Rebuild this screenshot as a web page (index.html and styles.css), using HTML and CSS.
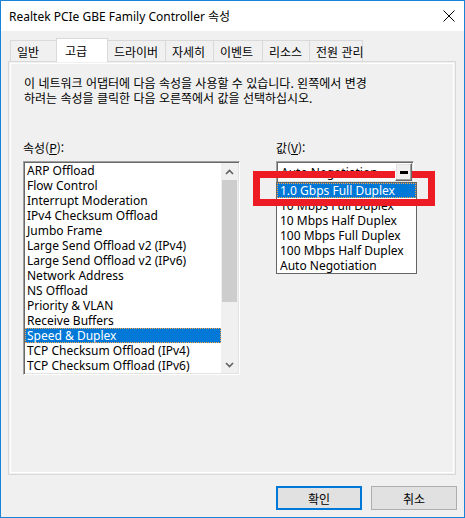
FILE: index.html
```html
<!DOCTYPE html>
<html lang="ko">
<head>
<meta charset="utf-8">
<title>Realtek PCIe GBE Family Controller 속성</title>
<link rel="stylesheet" href="styles.css">
</head>
<body>
<div class="window">
  <div class="titlebar">
    <span class="title">Realtek PCIe GBE Family Controller 속성</span>
    <svg class="close" width="12" height="12" viewBox="0 0 12 12"><path d="M0.5 0.5 L11.5 11.5 M11.5 0.5 L0.5 11.5" stroke="#000" stroke-width="1" fill="none"/></svg>
  </div>
  <div class="client">
    <div class="tabs">
      <div class="tab">일반</div>
      <div class="tab active">고급</div>
      <div class="tab">드라이버</div>
      <div class="tab">자세히</div>
      <div class="tab">이벤트</div>
      <div class="tab">리소스</div>
      <div class="tab last">전원 관리</div>
    </div>
    <div class="panel">
      <p class="desc">이 네트워크 어댑터에 다음 속성을 사용할 수 있습니다. 왼쪽에서 변경<br>하려는 속성을 클릭한 다음 오른쪽에서 값을 선택하십시오.</p>
      <div class="fields">
        <div class="col">
          <div class="label">속성(<u>P</u>):</div>
          <div class="listbox">
            <ul class="items">
              <li>ARP Offload</li>
              <li>Flow Control</li>
              <li>Interrupt Moderation</li>
              <li>IPv4 Checksum Offload</li>
              <li>Jumbo Frame</li>
              <li>Large Send Offload v2 (IPv4)</li>
              <li>Large Send Offload v2 (IPv6)</li>
              <li>Network Address</li>
              <li>NS Offload</li>
              <li>Priority &amp; VLAN</li>
              <li>Receive Buffers</li>
              <li class="sel">Speed &amp; Duplex</li>
              <li>TCP Checksum Offload (IPv4)</li>
              <li>TCP Checksum Offload (IPv6)</li>
            </ul>
            <div class="scrollbar">
              <div class="sb-btn"><svg width="9" height="6" viewBox="0 0 9 6"><path d="M1 5 L4.5 1.5 L8 5" stroke="#606060" stroke-width="1.6" fill="none"/></svg></div>
              <div class="thumb"></div>
              <div class="track"></div>
              <div class="sb-btn"><svg width="9" height="6" viewBox="0 0 9 6"><path d="M1 1 L4.5 4.5 L8 1" stroke="#606060" stroke-width="1.6" fill="none"/></svg></div>
            </div>
          </div>
        </div>
        <div class="col">
          <div class="label">값(<u>V</u>):</div>
          <div class="combo">
            <span class="combo-text">Auto Negotiation</span>
            <span class="combo-btn"><span class="bar"></span></span>
            <ul class="droplist">
              <li class="sel">1.0 Gbps Full Duplex</li>
              <li>10 Mbps Full Duplex</li>
              <li>10 Mbps Half Duplex</li>
              <li>100 Mbps Full Duplex</li>
              <li>100 Mbps Half Duplex</li>
              <li>Auto Negotiation</li>
            </ul>
          </div>
        </div>
      </div>
    </div>
    <div class="actions">
      <button class="btn default">확인</button>
      <button class="btn">취소</button>
    </div>
  </div>
  <div class="mark"></div>
</div>
</body>
</html>
```

FILE: styles.css
```css
html, body {
  margin: 0;
  padding: 0;
  background: #fff;
}

.window {
  position: relative;
  width: 465px;
  height: 518px;
  box-sizing: border-box;
  border: 1px solid #1883d7;
  background: #f0f0f0;
  display: flex;
  flex-direction: column;
  font-family: "Noto Sans", "Noto Sans CJK KR", sans-serif;
  color: #000;
}

.titlebar {
  height: 30px;
  background: #fff;
  display: flex;
  align-items: center;
  justify-content: space-between;
  padding: 0 9px 0 8px;
  font-size: 12px;
}

.close {
  display: block;
}

.client {
  flex: 1;
  display: flex;
  flex-direction: column;
  padding: 7px 8px 0 7px;
}

.tabs {
  display: grid;
  grid-template-columns: 46px 51px 58px 48px 49px 47px 54px;
  align-items: end;
  height: 23px;
  margin-left: 2px;
  font-family: "Noto Sans CJK KR", sans-serif;
  font-size: 12px;
}

.tab {
  box-sizing: border-box;
  height: 21px;
  border-top: 1px solid #d9d9d9;
  border-left: 1px solid #d9d9d9;
  background: #f0f0f0;
  padding: 0 6px;
  display: flex;
  align-items: center;
  white-space: nowrap;
}

.tab.last {
  border-right: 1px solid #d9d9d9;
}

.tab.active {
  position: relative;
  z-index: 1;
  height: 24px;
  margin-bottom: -1px;
  margin-right: -1px;
  border-right: 1px solid #d9d9d9;
  background: #fff;
  padding: 0 8px 1px;
}

.panel {
  box-sizing: border-box;
  height: 414px;
  border: 1px solid #d9d9d9;
  box-shadow: inset 0 0 0 1px #f0f0f0, inset 0 0 0 2px #fff;
  padding: 13px 14px;
}

.desc {
  margin: 0 0 0 1px;
  font-family: "Noto Sans CJK KR", sans-serif;
  font-size: 12px;
  line-height: 15px;
  white-space: nowrap;
}

.fields {
  display: grid;
  grid-template-columns: 217px 138px;
  column-gap: 36px;
  margin-top: 35px;
}

.label {
  font-family: "Noto Sans CJK KR", sans-serif;
  font-size: 12px;
  line-height: 15px;
  margin-bottom: 6px;
}

.listbox {
  box-sizing: border-box;
  height: 214px;
  display: flex;
  border: 1px solid;
  border-color: #a0a0a0 #fff #fff #a0a0a0;
  padding: 1px;
  box-shadow: inset 1px 1px 0 #696969, inset -1px -1px 0 #e3e3e3;
  background: #fff;
}

.items {
  flex: 1;
  margin: 0;
  padding: 0;
  list-style: none;
  background: #fff;
  font-size: 12px;
  line-height: 15px;
  white-space: nowrap;
  overflow: hidden;
}

.items li {
  padding-left: 2px;
}

.sel {
  background: #0078d7;
  color: #fff;
  outline: 1px dotted #f7a64a;
  outline-offset: -1px;
}

.scrollbar {
  width: 17px;
  display: flex;
  flex-direction: column;
  background: #f0f0f0;
}

.sb-btn {
  height: 17px;
  display: flex;
  align-items: center;
  justify-content: center;
}

.thumb {
  height: 122px;
  margin: 0 1px;
  background: #cdcdcd;
}

.track {
  flex: 1;
}

.combo {
  position: relative;
  box-sizing: border-box;
  height: 22px;
  display: flex;
  align-items: center;
  border: 1px solid;
  border-color: #a0a0a0 #fff #fff #a0a0a0;
  padding: 1px;
  box-shadow: inset 1px 1px 0 #696969, inset -1px -1px 0 #e3e3e3;
  background: #fff;
  font-size: 12px;
}

.combo-text {
  flex: 1;
  padding-left: 3px;
  line-height: 15px;
  white-space: nowrap;
}

.combo-btn {
  position: relative;
  z-index: 6;
  box-sizing: border-box;
  width: 17px;
  height: 18px;
  align-self: flex-start;
  background: #f0f0f0;
  border: 1px solid;
  border-color: #fff #696969 #696969 #fff;
  box-shadow: inset -1px -1px 0 #a0a0a0, inset 1px 1px 0 #e3e3e3;
  display: flex;
  align-items: center;
  justify-content: center;
}

.bar {
  width: 8px;
  height: 3px;
  background: #000;
  margin-top: 1px;
}

.droplist {
  position: absolute;
  top: 100%;
  left: -1px;
  width: 141px;
  box-sizing: border-box;
  margin: 0;
  padding: 0;
  list-style: none;
  background: #fff;
  border: 1px solid #646464;
  font-size: 12px;
  line-height: 15px;
  white-space: nowrap;
  z-index: 3;
}

.droplist li {
  padding-left: 3px;
}

.actions {
  display: flex;
  justify-content: flex-end;
  gap: 9px;
  margin-top: 11px;
  margin-right: -1px;
}

.btn {
  box-sizing: border-box;
  width: 86px;
  height: 24px;
  margin: 0;
  padding: 0;
  background: #e1e1e1;
  border: 1px solid #adadad;
  font-family: "Noto Sans CJK KR", sans-serif;
  font-size: 12px;
  color: #000;
}

.btn.default {
  border: 2px solid #0078d7;
}

.mark {
  position: absolute;
  left: 252px;
  top: 170px;
  width: 182px;
  height: 35px;
  box-sizing: border-box;
  border: 7px solid #ed1c24;
  z-index: 5;
}
```
